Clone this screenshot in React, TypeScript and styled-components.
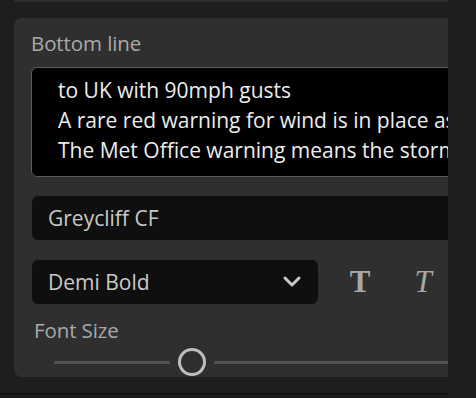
import React from "react";
import styled, { createGlobalStyle } from "styled-components";

const GlobalStyle = createGlobalStyle`
  html, body { margin: 0; padding: 0; background: #1e1e1e; }
  body { font-family: "Open Sans", Lato, sans-serif; }
`;

const Page = styled.div`
  display: flex;
  width: 476px;
  height: 398px;
  overflow: hidden;
  background: #1e1e1e;
`;

const Column = styled.div`
  width: 448px;
  display: flex;
  flex-direction: column;
  overflow: hidden;
`;

const PrevPanelEdge = styled.div`
  margin-left: 14px;
  height: 2px;
  flex: none;
  background: #2c2c2c;
`;

const Panel = styled.section`
  margin: 16px 0 0 14px;
  height: 359px;
  width: 470px;
  flex: none;
  box-sizing: border-box;
  background: #2f2f2f;
  border-radius: 8px 0 0 8px;
  padding: 12px 0 0 17px;
  display: flex;
  flex-direction: column;
  overflow: hidden;
`;

const Label = styled.div<{ $indent?: number; $top?: number }>`
  font-size: 20.5px;
  line-height: 26px;
  height: 26px;
  flex: none;
  color: #a9a9a9;
  letter-spacing: -0.1px;
  margin-top: ${(p) => p.$top ?? 0}px;
  padding-left: ${(p) => p.$indent ?? 0}px;
`;

const TextBox = styled.div`
  margin-top: 11px;
  height: 110px;
  flex: none;
  width: 460px;
  box-sizing: border-box;
  background: #000;
  border: 1px solid #5c5c5c;
  border-radius: 6px;
  padding: 7px 0 0 26px;
  font-size: 21px;
  line-height: 30px;
  color: #ececec;
  white-space: pre;
  overflow: hidden;
`;

const Field = styled.div`
  margin: 19px 0 0 1px;
  height: 44px;
  flex: none;
  width: 460px;
  box-sizing: border-box;
  background: #0f0f0f;
  border-radius: 6px;
  padding-left: 16px;
  display: flex;
  align-items: center;
  font-size: 21px;
  color: #c9c9c9;
`;

const Row = styled.div`
  margin: 20px 0 0 1px;
  display: flex;
  align-items: center;
  height: 44px;
  flex: none;
`;

const Select = styled.div`
  width: 286px;
  height: 44px;
  box-sizing: border-box;
  background: #0f0f0f;
  border-radius: 6px;
  padding: 0 16px 0 16px;
  display: flex;
  align-items: center;
  justify-content: space-between;
  font-size: 21px;
  color: #c9c9c9;
`;

const StyleButton = styled.div<{ $italic?: boolean }>`
  width: 44px;
  height: 44px;
  margin-left: ${(p) => (p.$italic ? 19 : 20)}px;
  display: flex;
  align-items: center;
  justify-content: center;
  font-family: "Liberation Serif", "DejaVu Serif", serif;
  font-size: 31px;
  font-weight: ${(p) => (p.$italic ? 400 : 700)};
  font-style: ${(p) => (p.$italic ? "italic" : "normal")};
  color: #a8a8a8;
`;

const SliderRow = styled.div`
  margin-top: 5px;
  padding-left: 23px;
  display: flex;
  align-items: center;
  gap: 8px;
  height: 28px;
  flex: none;
`;

const Track = styled.div<{ $w: number }>`
  width: ${(p) => p.$w}px;
  height: 3px;
  background: #545454;
  border-radius: 2px;
  flex: none;
`;

const Thumb = styled.div`
  width: 28px;
  height: 28px;
  flex: none;
  box-sizing: border-box;
  border: 3px solid #bdbdbd;
  border-radius: 50%;
`;

const BottomBar = styled.div`
  margin-top: 16px;
  height: 2px;
  flex: none;
  background: #121212;
`;

const Gutter = styled.div`
  width: 28px;
  background: #1f1f1f;
`;

const Chevron = () => (
  <svg width="20" height="12" viewBox="0 0 20 12">
    <path d="M3 2 L10 9 L17 2" fill="none" stroke="#c9c9c9" strokeWidth="3" strokeLinecap="round" strokeLinejoin="round" />
  </svg>
);

export default function App() {
  return (
    <>
      <GlobalStyle />
      <Page>
        <Column>
          <PrevPanelEdge />
          <Panel>
            <Label>Bottom line</Label>
            <TextBox>
              {"to UK with 90mph gusts\nA rare red warning for wind is in place as Storm Eunice approaches\nThe Met Office warning means the storm could cause danger to life"}
            </TextBox>
            <Field>Greycliff CF</Field>
            <Row>
              <Select>
                <span>Demi Bold</span>
                <Chevron />
              </Select>
              <StyleButton>T</StyleButton>
              <StyleButton $italic>T</StyleButton>
            </Row>
            <Label $indent={3} $top={13}>Font Size</Label>
            <SliderRow>
              <Track $w={116} />
              <Thumb />
              <Track $w={300} />
            </SliderRow>
          </Panel>
          <BottomBar />
        </Column>
        <Gutter />
      </Page>
    </>
  );
}
